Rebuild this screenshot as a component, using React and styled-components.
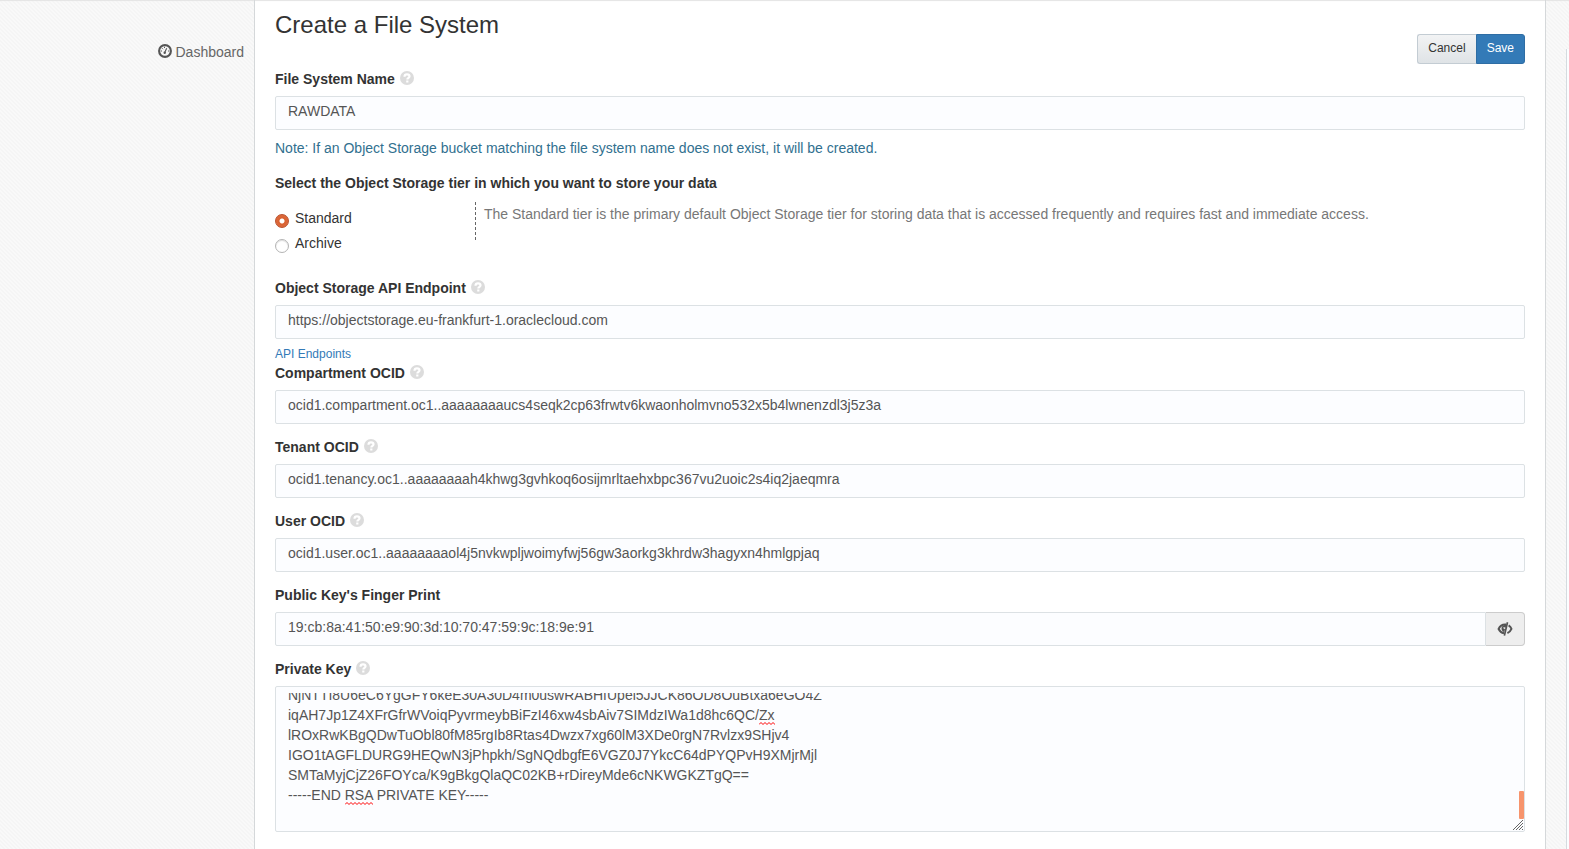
import React, { useLayoutEffect, useRef, useState } from 'react';
import styled, { createGlobalStyle } from 'styled-components';

const GlobalStyle = createGlobalStyle`
  *, *::before, *::after { box-sizing: border-box; }
  body {
    margin: 0;
    background-color: #f8f8f8;
    background-image: linear-gradient(45deg, #f9f9f9 25%, #f5f5f5 25% 50%, #f9f9f9 50% 75%, #f5f5f5 75%);
    background-size: 4px 4px;
    color: #333;
    font: 14px/20px "Liberation Sans", Arial, sans-serif;
  }
  input, textarea, button { font: inherit; }
`;

const Page = styled.div`
  display: flex;
  min-height: 100vh;
  box-shadow: inset 0 2px 1px -1px #e4e4e4;
`;

const Sidebar = styled.nav`
  flex: 0 0 254px;
  padding: 42px 10px 0;
  text-align: right;
`;

const NavLink = styled.a`
  display: inline-flex;
  align-items: center;
  gap: 4px;
  color: #666;
  text-decoration: none;
`;

const NavIcon = styled.svg`
  display: block;
  margin-bottom: 2px;
`;

const Panel = styled.main`
  flex: 1;
  min-width: 0;
  padding: 10px 20px 16px;
  background: #fff;
  border: 1px solid #d5d8da;
  border-width: 0 1px;
  box-shadow: inset 0 2px 1px -1px #e4e4e4;
`;

const Gutter = styled.aside`
  flex: 0 0 23px;
  display: flex;
  justify-content: flex-end;
  padding-top: 49px;
`;

const NextPanel = styled.div`
  width: 3px;
  background: #fcfdff;
  border-left: 1px solid #d5dbdf;
`;

const Header = styled.header`
  display: flex;
  justify-content: space-between;
  align-items: flex-start;
  height: 59px;
`;

const Title = styled.h1`
  margin: 0;
  font-size: 24px;
  font-weight: 400;
  line-height: 30px;
`;

const ButtonGroup = styled.div`
  display: flex;
  padding-top: 24px;
`;

const Button = styled.button`
  height: 30px;
  padding: 0 10px 2px;
  font-size: 12px;
  line-height: 18px;
  color: ${(p) => (p.$primary ? '#fff' : '#333')};
  background: ${(p) => (p.$primary ? '#337ab7' : 'linear-gradient(#f2f3f4, #dfe3e6)')};
  border: 1px solid ${(p) => (p.$primary ? '#2e6da4' : '#c3ccd3')};
  border-right-width: ${(p) => (p.$primary ? '1px' : '0')};
  border-radius: ${(p) => (p.$primary ? '0 3px 3px 0' : '3px 0 0 3px')};
`;

const Field = styled.div`
  margin-bottom: ${(p) => p.$gap ?? 13}px;
`;

const LabelRow = styled.div`
  display: flex;
  align-items: center;
  gap: 5px;
  height: 27px;
  padding-bottom: 7px;
`;

const Label = styled.label`
  font-weight: 700;
`;

const HelpIcon = styled.svg`
  display: block;
  margin-bottom: 2px;
`;

const TextInput = styled.input`
  display: block;
  flex: 1;
  width: 100%;
  min-width: 0;
  height: 34px;
  padding: 4px 12px 8px;
  color: #555;
  background: #fcfdff;
  border: 1px solid #dce1e4;
  border-radius: ${(p) => (p.$joined ? '2px 0 0 2px' : '2px')};
  outline: none;
`;

const InputGroup = styled.div`
  display: flex;
`;

const Addon = styled.button`
  display: flex;
  align-items: center;
  justify-content: center;
  width: 39px;
  padding: 0;
  color: #555;
  background: #eee;
  border: 1px solid #ccc;
  border-left: 0;
  border-radius: 0 4px 4px 0;
`;

const Note = styled.p`
  margin: 8px 0 15px;
  color: #31708f;
`;

const Tier = styled.fieldset`
  min-width: 0;
  margin: 0 0 20px;
  padding: 0;
  border: 0;
`;

const Legend = styled.legend`
  padding: 0;
  font-weight: 700;
`;

const TierBody = styled.div`
  display: flex;
  align-items: flex-start;
  padding-top: 9px;
`;

const Options = styled.div`
  flex: 0 0 200px;
  padding-top: 6px;
`;

const Option = styled.label`
  display: flex;
  align-items: flex-start;
  gap: 6px;
  height: 25px;
`;

const Radio = styled.input`
  appearance: none;
  width: 14px;
  height: 14px;
  margin: 6px 0 0;
  border: 1px solid #b4b4b4;
  border-radius: 50%;
  background: #fff;
  box-shadow: inset 0 1px 1px #ddd;
  &:checked {
    border-color: #b9502c;
    background: radial-gradient(circle, #fff 0 2px, #d9602f 3px, #dd6a3d 6px);
    box-shadow: none;
  }
`;

const TierText = styled.p`
  margin: 0;
  height: 38px;
  padding: 2px 0 0 8px;
  color: #777;
  border-left: 1px dashed #666;
`;

const SmallLink = styled.a`
  display: block;
  padding-top: 6px;
  font-size: 12px;
  line-height: 18px;
  color: #337ab7;
  text-decoration: none;
`;

const KeyBox = styled.div`
  position: relative;
  height: 146px;
  padding: 6px 0 6px 12px;
  background: #fcfdff;
  border: 1px solid #dce1e4;
  border-radius: 2px;
`;

const KeyArea = styled.textarea`
  display: block;
  width: 100%;
  height: 100%;
  padding: 0;
  color: #555;
  background: transparent;
  border: 0;
  outline: none;
  resize: none;
  scrollbar-width: none;
`;

const Thumb = styled.div`
  position: absolute;
  right: 0;
  bottom: 12px;
  width: 5px;
  height: 28px;
  background: #f7946c;
  border-radius: 1px;
`;

const Grip = styled.svg`
  position: absolute;
  right: 1px;
  bottom: 1px;
`;

const Squiggle = styled.span`
  position: absolute;
  left: ${(p) => p.$left}px;
  bottom: ${(p) => p.$bottom}px;
  width: ${(p) => p.$width}px;
  height: 3px;
  overflow: hidden;
  pointer-events: none;
  svg { display: block; }
`;

function Help() {
  return (
    <HelpIcon width="14" height="14" viewBox="0 0 14 14" role="img" aria-label="Help">
      <circle cx="7" cy="7" r="7" fill="#dcdcdc" />
      <path d="M4.500 5.700C4.500 4.100 5.500 3.400 7 3.400s2.500.7 2.500 1.900c0 1.500-2.200 1.500-2.200 3.300" fill="none" stroke="#fff" strokeWidth="2.200" />
      <rect x="6.200" y="9.500" width="2.200" height="2" fill="#fff" />
    </HelpIcon>
  );
}

function DashboardIcon() {
  return (
    <NavIcon width="14" height="14" viewBox="0 0 14 14" aria-hidden="true">
      <circle cx="7" cy="7" r="5.900" fill="none" stroke="#555" strokeWidth="2.100" />
      <path d="M6.600 8.800 8.700 4.200" stroke="#555" strokeWidth="1.100" />
      <circle cx="6.700" cy="8.800" r="1.200" fill="#555" />
      <path d="M2.800 7H4M10 7h1.200M4 4.200l1 1M6.500 2.800V4" stroke="#555" strokeWidth="1" />
    </NavIcon>
  );
}

function HiddenEyeIcon() {
  return (
    <svg width="16" height="14" viewBox="0 0 16 14" aria-hidden="true">
      <path d="M9 2.600C5.400 2.300 2.700 4.500 1.600 7c1 2.100 2.700 3.800 5.400 4.300" fill="none" stroke="#555" strokeWidth="2" />
      <path d="M9.500 2.500C6 2.800 4.300 4.500 4.500 6.800c.1 1.500 1 2.700 2.700 3.500L8 7.300 6.300 6.200l.4-1.200 2 .7z" fill="#555" />
      <path d="M10.500.300 7.400 13.600" stroke="#555" strokeWidth="1.700" />
      <path d="M11.600 3.400c1.400.9 2.400 2.200 2.900 3.500-.7 1.700-2.200 3.300-4.100 4.200" fill="none" stroke="#555" strokeWidth="1.900" />
    </svg>
  );
}

function Wave({ width, left, bottom }) {
  return (
    <Squiggle $width={width} $left={left} $bottom={bottom}>
      <svg width="48" height="3" viewBox="0 0 48 3" aria-hidden="true">
        <path
          d={'M0 2.500' + Array.from({ length: 12 }, () => 'l2-2 2 2').join('')}
          fill="none"
          stroke="#f00"
          strokeWidth="1"
        />
      </svg>
    </Squiggle>
  );
}

function TextField({ id, label, value, help = true, gap, children }) {
  return (
    <Field $gap={gap}>
      <LabelRow>
        <Label htmlFor={id}>{label}</Label>
        {help && <Help />}
      </LabelRow>
      {children ?? <TextInput id={id} type="text" defaultValue={value} />}
    </Field>
  );
}

const PRIVATE_KEY = `NjNTTI8U6eC6YgGFY6keE30A30D4m0uswRABHfUpel5JJCK86OD8OuBtxa6eGO4Z
iqAH7Jp1Z4XFrGfrWVoiqPyvrmeybBiFzI46xw4sbAiv7SIMdzIWa1d8hc6QC/Zx
lROxRwKBgQDwTuObl80fM85rgIb8Rtas4Dwzx7xg60lM3XDe0rgN7Rvlzx9SHjv4
IGO1tAGFLDURG9HEQwN3jPhpkh/SgNQdbgfE6VGZ0J7YkcC64dPYQPvH9XMjrMjl
SMTaMyjCjZ26FOYca/K9gBkgQlaQC02KB+rDireyMde6cNKWGKZTgQ==
-----END RSA PRIVATE KEY-----
`;

function PrivateKey({ id }) {
  const area = useRef(null);
  useLayoutEffect(() => {
    area.current.scrollTop = area.current.scrollHeight;
  }, []);
  return (
    <KeyBox>
      <KeyArea id={id} ref={area} defaultValue={PRIVATE_KEY} spellCheck={false} />
      <Wave width={16} left={483} bottom={106} />
      <Wave width={28} left={69} bottom={26} />
      <Thumb />
      <Grip width="10" height="10" viewBox="0 0 10 10" aria-hidden="true">
        <path d="M0 10 10 0M3 10l7-7M6 10l4-4M9 10l1-1" stroke="#666" strokeWidth="1" />
      </Grip>
    </KeyBox>
  );
}

export default function App() {
  const [tier, setTier] = useState('Standard');
  return (
    <>
      <GlobalStyle />
      <Page>
        <Sidebar>
          <NavLink href="#dashboard">
            <DashboardIcon />
            Dashboard
          </NavLink>
        </Sidebar>
        <Panel>
          <Header>
            <Title>Create a File System</Title>
            <ButtonGroup>
              <Button type="button">Cancel</Button>
              <Button type="button" $primary>Save</Button>
            </ButtonGroup>
          </Header>
          <TextField id="name" label="File System Name" value="RAWDATA" gap={0} />
          <Note>Note: If an Object Storage bucket matching the file system name does not exist, it will be created.</Note>
          <Tier>
            <Legend>Select the Object Storage tier in which you want to store your data</Legend>
            <TierBody>
              <Options>
                {['Standard', 'Archive'].map((name) => (
                  <Option key={name}>
                    <Radio type="radio" name="tier" checked={tier === name} onChange={() => setTier(name)} />
                    {name}
                  </Option>
                ))}
              </Options>
              <TierText>
                The Standard tier is the primary default Object Storage tier for storing data that is accessed frequently and requires fast and immediate access.
              </TierText>
            </TierBody>
          </Tier>
          <TextField id="endpoint" label="Object Storage API Endpoint" value="https://objectstorage.eu-frankfurt-1.oraclecloud.com" gap={0} />
          <SmallLink href="#endpoints">API Endpoints</SmallLink>
          <TextField id="compartment" label="Compartment OCID" value="ocid1.compartment.oc1..aaaaaaaaucs4seqk2cp63frwtv6kwaonholmvno532x5b4lwnenzdl3j5z3a" />
          <TextField id="tenant" label="Tenant OCID" value="ocid1.tenancy.oc1..aaaaaaaah4khwg3gvhkoq6osijmrltaehxbpc367vu2uoic2s4iq2jaeqmra" />
          <TextField id="user" label="User OCID" value="ocid1.user.oc1..aaaaaaaaol4j5nvkwpljwoimyfwj56gw3aorkg3khrdw3hagyxn4hmlgpjaq" />
          <TextField id="fingerprint" label="Public Key's Finger Print" help={false}>
            <InputGroup>
              <TextInput id="fingerprint" type="text" $joined defaultValue="19:cb:8a:41:50:e9:90:3d:10:70:47:59:9c:18:9e:91" />
              <Addon type="button" aria-label="Hide finger print">
                <HiddenEyeIcon />
              </Addon>
            </InputGroup>
          </TextField>
          <TextField id="private-key" label="Private Key" gap={0}>
            <PrivateKey id="private-key" />
          </TextField>
        </Panel>
        <Gutter>
          <NextPanel />
        </Gutter>
      </Page>
    </>
  );
}
